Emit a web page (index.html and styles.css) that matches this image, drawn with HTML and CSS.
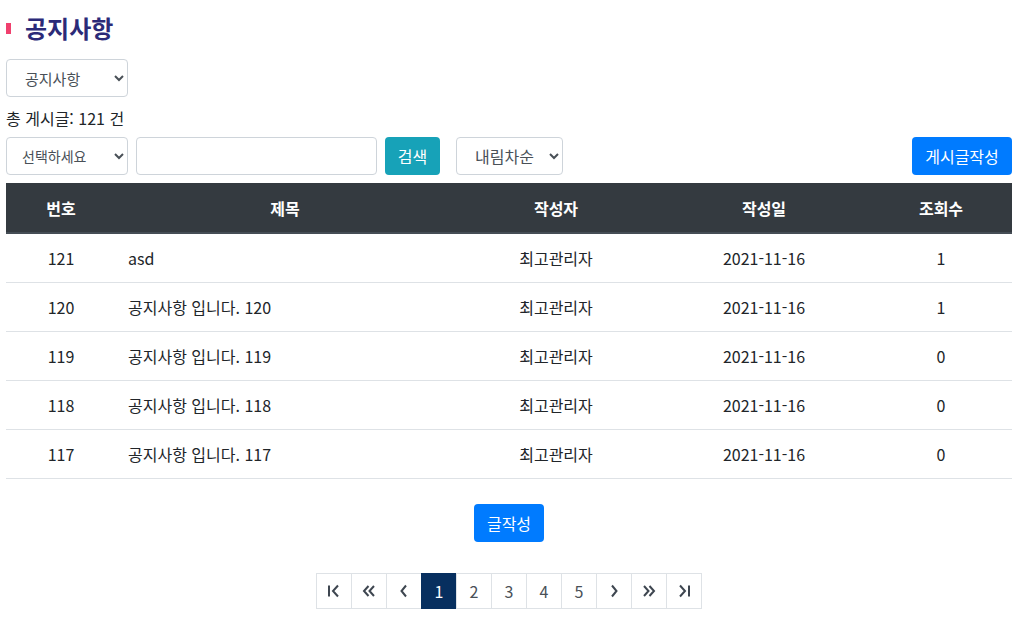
FILE: index.html
```html
<!DOCTYPE html>
<html lang="ko">
<head>
<meta charset="utf-8">
<title>공지사항</title>
<link rel="stylesheet" href="styles.css">
</head>
<body>
<div class="page">
  <h2 class="title"><span class="title-bar"></span>공지사항</h2>
  <select class="select select-board"><option>공지사항</option></select>
  <p class="count">총 게시글: 121 건</p>
  <div class="toolbar">
    <select class="select select-field"><option>선택하세요</option></select>
    <input class="search-input" type="text">
    <button class="btn btn-info">검색</button>
    <select class="select select-order"><option>내림차순</option></select>
    <button class="btn btn-primary btn-write-top">게시글작성</button>
  </div>
  <table class="board">
    <colgroup>
      <col class="c-no"><col class="c-title"><col class="c-writer"><col class="c-date"><col class="c-hit">
    </colgroup>
    <thead>
      <tr><th>번호</th><th>제목</th><th>작성자</th><th>작성일</th><th>조회수</th></tr>
    </thead>
    <tbody>
      <tr><td>121</td><td class="t-left">asd</td><td>최고관리자</td><td>2021-11-16</td><td>1</td></tr>
      <tr><td>120</td><td class="t-left">공지사항 입니다. 120</td><td>최고관리자</td><td>2021-11-16</td><td>1</td></tr>
      <tr><td>119</td><td class="t-left">공지사항 입니다. 119</td><td>최고관리자</td><td>2021-11-16</td><td>0</td></tr>
      <tr><td>118</td><td class="t-left">공지사항 입니다. 118</td><td>최고관리자</td><td>2021-11-16</td><td>0</td></tr>
      <tr><td>117</td><td class="t-left">공지사항 입니다. 117</td><td>최고관리자</td><td>2021-11-16</td><td>0</td></tr>
    </tbody>
  </table>
  <div class="write-row">
    <button class="btn btn-primary">글작성</button>
  </div>
  <nav class="pager-wrap">
    <ul class="pager">
      <li><a><svg class="ico" width="16" height="14" viewBox="0 0 16 14"><path d="M3 1.5v11M12 1.5 L7 7 L12 12.5" stroke-width="2" fill="none"/></svg></a></li>
      <li><a><svg class="ico" width="16" height="14" viewBox="0 0 16 14"><path d="M7.5 2 L3 7 L7.5 12 M13 2 L8.5 7 L13 12" stroke-width="2" fill="none"/></svg></a></li>
      <li><a><svg class="ico" width="16" height="14" viewBox="0 0 16 14"><path d="M10 1.5 L5.5 7 L10 12.5" stroke-width="2" fill="none"/></svg></a></li>
      <li class="active"><a>1</a></li>
      <li><a>2</a></li>
      <li><a>3</a></li>
      <li><a>4</a></li>
      <li><a>5</a></li>
      <li><a><svg class="ico" width="16" height="14" viewBox="0 0 16 14"><path d="M6 1.5 L10.5 7 L6 12.5" stroke-width="2" fill="none"/></svg></a></li>
      <li><a><svg class="ico" width="16" height="14" viewBox="0 0 16 14"><path d="M3 2 L7.5 7 L3 12 M8.5 2 L13 7 L8.5 12" stroke-width="2" fill="none"/></svg></a></li>
      <li><a><svg class="ico" width="16" height="14" viewBox="0 0 16 14"><path d="M4 1.5 L9 7 L4 12.5M13 1.5v11" stroke-width="2" fill="none"/></svg></a></li>
    </ul>
  </nav>
</div>
</body>
</html>
```

FILE: styles.css
```css
* { box-sizing: border-box; }
html, body { margin: 0; padding: 0; background: #fff; }
body {
  font-family: "Noto Sans CJK KR", "Noto Sans", sans-serif;
  color: #212529;
  font-size: 16px;
}
.page { padding: 0 9px 0 6px; }
.title {
  display: flex;
  align-items: center;
  margin: 10px 0 14px;
  height: 35px;
  font-size: 24px;
  font-weight: 700;
  color: #2b2a78;
}
.title-bar {
  width: 5px;
  height: 11px;
  background: #f0406e;
  margin: 2px 14px 0 0;
}
.select {
  height: 38px;
  border: 1px solid #ced4da;
  border-radius: 4px;
  background: #fff;
  color: #495057;
  font-family: inherit;
  padding: 0 6px 0 14px;
}
.select-board { width: 122px; font-size: 15px; display: block; padding-left: 14px; }
.select-field { width: 122px; font-size: 14px; padding-left: 11px; }
.select-order { width: 107px; font-size: 16px; margin-left: 8px; }
.count { margin: 9px 0 7px; line-height: 24px; font-size: 16px; }
.toolbar { display: flex; align-items: center; gap: 8px; height: 38px; }
.search-input {
  width: 241px;
  height: 38px;
  border: 1px solid #ced4da;
  border-radius: 4px;
}
.btn {
  height: 38px;
  border: none;
  border-radius: 4px;
  color: #fff;
  font-family: inherit;
  font-size: 16px;
  padding: 0 13px;
}
.btn-info { background: #17a2b8; width: 55px; padding: 0; }
.btn-primary { background: #007bff; }
.btn-write-top { margin-left: auto; width: 100px; padding: 0; }
.board {
  width: 1006px;
  margin-top: 8px;
  border-collapse: collapse;
  table-layout: fixed;
  font-size: 16px;
}
.c-no { width: 110px; }
.c-title { width: 338px; }
.c-writer { width: 204px; }
.c-date { width: 212px; }
.c-hit { width: 142px; }
.board th {
  background: #343a40;
  color: #fff;
  font-weight: 700;
  height: 50px;
  border-bottom: 2px solid #454d55;
  text-align: center;
}
.board td {
  height: 49px;
  border-bottom: 1px solid #dee2e6;
  text-align: center;
  padding: 0 12px;
}
.board td.t-left { text-align: left; }
.write-row { display: flex; justify-content: center; margin-top: 25px; }
.write-row .btn { width: 70px; padding: 0; }
.pager-wrap { display: flex; justify-content: center; margin-top: 31px; }
.pager { display: flex; list-style: none; margin: 0; padding: 0; }
.pager li a {
  display: flex;
  align-items: center;
  justify-content: center;
  width: 36px;
  height: 36px;
  border: 1px solid #dee2e6;
  margin-left: -1px;
  color: #495057;
  font-size: 16px;
  background: #fff;
}
.pager li:first-child a { margin-left: 0; }
.pager li.active a { background: #072f5f; border-color: #072f5f; color: #fff; }
.ico { stroke: #3e4650; }
```
